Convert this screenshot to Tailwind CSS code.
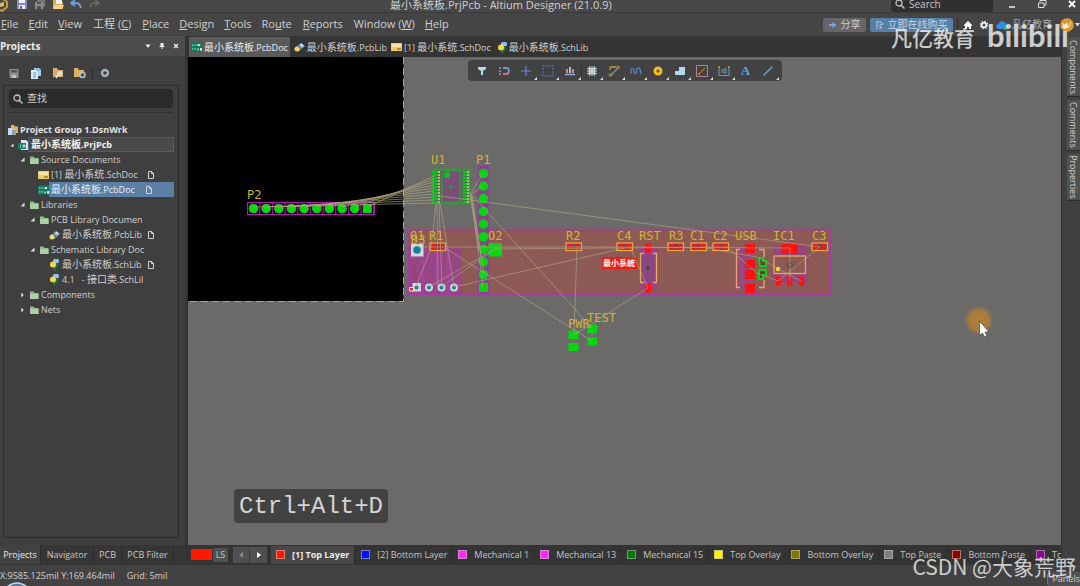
<!DOCTYPE html>
<html lang="zh">

<head>
    <meta charset="UTF-8">
    <meta name="viewport" content="width=device-width, initial-scale=1.0">
    <title>最小系统板.PrjPcb - Altium Designer (21.0.9)</title>
    <script src="https://cdn.jsdelivr.net/npm/@tailwindcss/browser@4"></script>
</head>

<body class="h-screen flex flex-col overflow-hidden bg-[#404040] text-[#d0d0d0] text-[9px] leading-[15px] font-['Open_Sans','Noto_Sans_CJK_SC',sans-serif] whitespace-nowrap">

    <!-- Shared icons -->
    <svg class="hidden">
        <symbol id="i-folder" viewBox="0 0 10 10"><path d="M1 1.500h3.500l1 1.500H9.500V9H1z" fill="#93bd8f" /><path d="M1 4h8.500v5H1z" fill="#abd0a5" /></symbol>
        <symbol id="i-pcb" viewBox="0 0 12 10"><path d="M0 0h12v10H0z" fill="#0f7a5c" /><path d="M2 2v2M4.500 2v2M2 6v2M4.500 6v2" stroke="#9fe0c8" /><path d="M7 2h3v2H7zM7 6.500h1.500v2H7zM10 6h2v3h-2z" fill="#e0f5ee" /></symbol>
        <symbol id="i-sch" viewBox="0 0 11 10"><path d="M0 1h11v8H0z" fill="#ecca72" /><path d="M1 2h9v3H1z" fill="#f8e3a2" /><path d="M6 6h4v2H6z" fill="#b98a35" /></symbol>
        <symbol id="i-pcblib" viewBox="0 0 11 10"><path d="M1 6l6-5 4 3-6 5z" fill="#8ba7c4" /><path d="M3 3l4 4" stroke="#2c3b4a" /><circle cx="3" cy="7" r="2.500" fill="#f3d667" /><path d="M7 2l2 2" stroke="#e8eef4" stroke-width="1.500" /></symbol>
        <symbol id="i-schlib" viewBox="0 0 11 11"><rect x="4" y="0" width="6" height="4" rx="1.500" fill="#8fc1ee" /><path d="M5 4h4v3l-3 4H4z" fill="#23743a" /><circle cx="4" cy="5.500" r="3" fill="#f5d64a" /></symbol>
        <symbol id="i-doc" viewBox="0 0 8 10"><path d="M1.500 1.500h3l2 2v5h-5zM4.500 1.500v2h2" fill="none" stroke="#d4d4d4" /></symbol>
        <symbol id="i-open" viewBox="0 0 6 6"><path d="M5.500 .5v5h-5z" fill="#dadada" /></symbol>
        <symbol id="i-closed" viewBox="0 0 6 6"><path d="M1.500 0l3 3-3 3z" fill="#dadada" /></symbol>
        <symbol id="i-search" viewBox="0 0 10 10"><circle cx="4" cy="4" r="3" fill="none" stroke="#c4c4c4" stroke-width="1.300" /><path d="M6.200 6.200L9.500 9.500" stroke="#c4c4c4" stroke-width="1.500" /></symbol>
    </svg>

    <!-- Title bar -->
    <header class="h-[17px] -mt-1 shrink-0 flex items-center bg-[#484848] border-b border-[#3a3a3a]">
        <div class="w-[390px] flex items-center gap-1.5">
            <svg class="w-2 h-4" viewBox="0 0 8 16"><path d="M-3 3h6l4 3v5l-5 4-4-2" fill="none" stroke="#c69a3c" stroke-width="2" /><path d="M0 7l4-1v4l-4 1z" fill="#e2b95b" /></svg>
            <button class="ml-0.5" aria-label="Save"><svg class="w-3 h-3" viewBox="0 0 12 12"><path d="M1 1h10v10H1z" fill="#8588c9" /><path d="M3 1h6v4H3zM3 7h6v4H3z" fill="#f2f2fa" /><path d="M4 8h2v3H4z" fill="#5d60a0" /></svg></button>
            <button aria-label="Save all"><svg class="w-3 h-3" viewBox="0 0 12 12"><path d="M3 1h8v8H3z" fill="#777" /><path d="M1 4h8v7H1z" fill="#8d8d8d" /><path d="M3 4h4v2H3zM3 8h4v3H3z" fill="#555" /></svg></button>
            <button aria-label="Open"><svg class="w-3 h-3" viewBox="0 0 12 12"><path d="M1 2h5l1 2h4v7H1z" fill="#d9a94f" /><path d="M4 1h6v5H4z" fill="#eef1f6" /><path d="M2 7h10l-2 4H1z" fill="#f5d68f" /></svg></button>
            <button aria-label="Undo"><svg class="w-3 h-3" viewBox="0 0 12 12"><path d="M5 2L1 5l4 3M1 5h5q4 0 5 5" fill="none" stroke="#6d9fdd" stroke-width="1.800" /></svg></button>
            <button aria-label="Redo"><svg class="w-3 h-3" viewBox="0 0 12 12"><path d="M7 2l4 3-4 3M11 5H7Q3 5 2 9" fill="none" stroke="#6c6c6c" stroke-width="1.500" /></svg></button>
        </div>
        <h1 class="text-[11px]">最小系统板.PrjPcb - Altium Designer (21.0.9)</h1>
        <label class="ml-auto w-[102px] h-[15px] px-1 flex items-center gap-1 bg-[#303030] rounded-b-sm text-[10px]">
            <svg class="w-2.5 h-2.5 shrink-0"><use href="#i-search" /></svg>
            <input type="text" placeholder="Search" aria-label="Search" class="w-full min-w-0 outline-none placeholder:text-[#c8c8c8]">
        </label>
        <div class="ml-3.5 mr-[3px] flex items-center gap-5">
            <button aria-label="Minimize"><svg class="w-2.5 h-2.5" viewBox="0 0 10 10"><path d="M2 8h6" stroke="#eee" stroke-width="1.500" /></svg></button>
            <button aria-label="Restore"><svg class="w-2.5 h-2.5" viewBox="0 0 10 10"><path d="M3 3V1.500h6V6H7M1.500 4H7v4.500H1.500z" fill="none" stroke="#ddd" /></svg></button>
            <button aria-label="Close"><svg class="w-2.5 h-2.5" viewBox="0 0 10 10"><path d="M2 2l6 6M8 2L2 8" stroke="#fff" stroke-width="1.800" /></svg></button>
        </div>
    </header>

    <!-- Menu bar -->
    <nav class="h-[23px] shrink-0 flex items-center bg-[#454545] text-[11px]">
        <div class="pl-px pb-0.5 flex gap-2.5">
            <button><u>F</u>ile</button>
            <button><u>E</u>dit</button>
            <button><u>V</u>iew</button>
            <button class="px-px">工程 (<u>C</u>)</button>
            <button><u>P</u>lace</button>
            <button><u>D</u>esign</button>
            <button><u>T</u>ools</button>
            <button>Ro<u>u</u>te</button>
            <button class="px-px"><u>R</u>eports</button>
            <button>Window (<u>W</u>)</button>
            <button><u>H</u>elp</button>
        </div>
        <div class="ml-auto flex items-center gap-1 text-[10px]">
            <button class="w-[43px] h-3.5 flex items-center justify-center gap-1 bg-[#666] rounded-xs">
                <svg class="w-2 h-2" viewBox="0 0 8 8"><path d="M0 4h4" stroke="#62aef5" stroke-width="2" /><path d="M3.500 1L7.500 4l-4 3z" fill="#62aef5" /></svg>分享
            </button>
            <button class="w-[83px] h-3.5 flex items-center justify-center gap-1 bg-[#567fa6] rounded-xs text-[#c5d5e4]">
                <svg class="w-2 h-2" viewBox="0 0 8 8"><path d="M1 0v8M1 1h4l2 2-3 1M3 4l3 3H3" fill="none" stroke="#b9cddf" /></svg>立即在线购买
            </button>
            <span class="w-px h-3.5 bg-[#2e2e2e]"></span>
            <button aria-label="Home"><svg class="w-3 h-3" viewBox="0 0 12 12"><path d="M6 2L2 6v1h1v3h2V8h2v2h2V7h1V6z" fill="#fff" /></svg></button>
            <button aria-label="Settings"><svg class="w-3 h-3" viewBox="0 0 12 12"><circle cx="6" cy="6" r="2.300" fill="none" stroke="#fff" stroke-width="1.600" /><circle cx="6" cy="6" r="3.600" fill="none" stroke="#fff" stroke-width="1.300" stroke-dasharray="1.400 1.430" /></svg></button>
            <button class="pl-0.5 pr-1 flex items-center gap-1 text-[#aaa]">
                <svg class="w-3 h-3" viewBox="0 0 12 12"><path d="M3 10a2.500 2.500 0 0 1-.5-5A3.500 3.500 0 0 1 9 4a3 3 0 0 1 0 6z" fill="#2f8fe8" /><circle cx="10" cy="9" r="2" fill="#41b860" /></svg>凡亿教育
            </button>
            <button class="flex items-center" aria-label="Account">
                <svg class="w-3.5 h-3.5" viewBox="0 0 14 14"><circle cx="7" cy="7" r="6.800" fill="#d99a32" /><path d="M3 5l1.500 5L7 5l1 5 3-6" fill="none" stroke="#fbe9c6" /></svg>
                <svg class="w-1.5 h-1.5" viewBox="0 0 6 6"><path d="M1 1h5L3.500 4.500z" fill="#ddd" /></svg>
            </button>
        </div>
    </nav>

    <main class="flex-1 min-h-0 flex">
        <!-- Projects panel -->
        <aside class="w-[185px] shrink-0 flex flex-col bg-[#3f3f3f]">
            <div class="h-5 shrink-0 pr-1.5 flex items-center bg-[#4c4c4c]">
                <h2 class="mr-auto text-[10px] font-bold text-[#eee]">Projects</h2>
                <div class="flex gap-2">
                    <button aria-label="Panel menu"><svg class="w-1.5 h-1.5" viewBox="0 0 6 6"><path d="M.5 1.500h5L3 5z" fill="#eee" /></svg></button>
                    <button aria-label="Pin"><svg class="w-1.5 h-1.5" viewBox="0 0 6 6"><path d="M1.500 0h3v3h1v1h-5V3h1zM2.500 4h1v2h-1z" fill="#eee" /></svg></button>
                    <button aria-label="Close panel"><svg class="w-1.5 h-1.5" viewBox="0 0 6 6"><path d="M1 1l4 4M5 1L1 5" stroke="#eee" stroke-width="1.300" /></svg></button>
                </div>
            </div>
            <div class="h-[29px] shrink-0 pt-1 pl-2 flex items-center gap-2.5">
                <button aria-label="Save"><svg class="w-3 h-3" viewBox="0 0 12 12"><path d="M1.500 2h9v9h-9z" fill="#8f8f8f" /><path d="M3 3h6v2.500H3z" fill="#555" /><path d="M4 8h4v3H4z" fill="#c4c4c4" /></svg></button>
                <button aria-label="Copy"><svg class="w-3 h-3" viewBox="0 0 12 12"><path d="M4 1h5l2 2v6H4z" fill="#a7cdf0" /><path d="M1 3h5l2 2v7H1z" fill="#dcebfa" /><path d="M3 6h3M3 8h3M3 10h3M6 2l3 2" stroke="#5791c8" /></svg></button>
                <button aria-label="Project folder"><svg class="w-3 h-3" viewBox="0 0 12 12"><path d="M1 1h4l1 2h5v7H1z" fill="#dcae66" /><circle cx="8" cy="6.500" r="2.500" fill="#d9e0e6" /><path d="M6 8l-2 3" stroke="#eee" stroke-width="1.500" /></svg></button>
                <button aria-label="Folder options"><svg class="w-3 h-3" viewBox="0 0 12 12"><path d="M0 1h4l1 2h5v7H0z" fill="#dcae66" /><circle cx="8.500" cy="8" r="2.500" fill="#4c4c4c" stroke="#b6c3c6" stroke-width="1.500" /></svg></button>
                <span class="-ml-1 w-px h-3 bg-[#2c2c2c]"></span>
                <button class="-ml-1" aria-label="Options"><svg class="w-3 h-3" viewBox="0 0 12 12"><circle cx="6" cy="6" r="3" fill="none" stroke="#a5b1b9" stroke-width="2.400" /></svg></button>
            </div>
            <div class="flex-1 ml-[3px] mr-1.5 mb-[7px] border border-[#2d2d2d]">
                <div class="px-[5px] pt-[3px] pb-1">
                    <label class="h-[19px] px-1 flex items-center gap-1 bg-[#2b2b2b] rounded-sm text-[10px]">
                        <svg class="w-2.5 h-2.5 shrink-0"><use href="#i-search" /></svg>
                        <input type="text" placeholder="查找" aria-label="查找" class="w-full min-w-0 outline-none placeholder:text-[#d0d0d0]">
                    </label>
                </div>
                <div class="mx-[5px] border-t border-[#303030]"></div>
                <ul class="mt-[9px] mr-1">
                    <li class="h-[15px] pl-1 flex items-center gap-0.5 font-bold text-[#e4e4e4]">
                        <svg class="w-2.5 h-2.5" viewBox="0 0 10 10"><path d="M3 0h3l1 1.500h3V8H3z" fill="#e0b066" /><path d="M0 3h5v7H0z" fill="#c9d6e3" /><path d="M4 5h4v5H4z" fill="#8fa3b8" /></svg>
                        Project Group 1.DsnWrk
                    </li>
                    <li class="h-[15px] pl-1.5 flex items-center gap-1 font-bold text-[#f2f2f2]">
                        <svg class="w-1 h-1.5"><use href="#i-open" /></svg>
                        <svg class="w-2.5 h-2.5" viewBox="0 0 10 10"><path d="M3 0h5l2 2v8H3z" fill="#dfe9e6" /><path d="M0 3h8v6H0z" fill="#0f8063" /><path d="M2 5h1M2 7h1M5 5h2v2H5z" stroke="#c8f0e2" fill="none" /></svg>
                        <span class="flex-1 h-[15px] -ml-1 pl-0.5 leading-[13px] bg-[#4a4a4a] border border-[#46637c]"><span class="text-[10px]">最小系统板</span>.PrjPcb</span>
                    </li>
                    <li class="h-[15px] pl-4 flex items-center gap-1"><svg class="w-[5px] h-[5px]"><use href="#i-open" /></svg><svg class="w-2.5 h-2.5"><use href="#i-folder" /></svg><span class="-ml-0.5">Source Documents</span></li>
                    <li class="h-[15px] pl-[34px] flex items-center gap-0.5">
                        <svg class="w-[11px] h-2.5"><use href="#i-sch" /></svg><span class="w-[94px]">[1] <span class="text-[10px]">最小系统</span>.SchDoc</span><svg class="w-2 h-2.5"><use href="#i-doc" /></svg>
                    </li>
                    <li class="h-[15px] pl-[34px] flex items-center">
                        <svg class="w-[11px] h-2.5"><use href="#i-pcb" /></svg><span class="flex-1 flex items-center pl-0.5 bg-[#5c80a5] text-[#e6eef5]"><span class="w-[94px]"><span class="text-[10px]">最小系统板</span>.PcbDoc</span><svg class="w-2 h-2.5"><use href="#i-doc" /></svg></span>
                    </li>
                    <li class="h-[15px] pl-4 flex items-center gap-1"><svg class="w-[5px] h-[5px]"><use href="#i-open" /></svg><svg class="w-2.5 h-2.5"><use href="#i-folder" /></svg><span class="-ml-0.5">Libraries</span></li>
                    <li class="h-[15px] pl-[26px] flex items-center gap-1"><svg class="w-[5px] h-[5px]"><use href="#i-open" /></svg><svg class="w-2.5 h-2.5"><use href="#i-folder" /></svg><span class="-ml-0.5">PCB Library Documen</span></li>
                    <li class="h-[15px] pl-[45px] flex items-center gap-0.5">
                        <svg class="w-[11px] h-2.5"><use href="#i-pcblib" /></svg><span class="w-[83px]"><span class="text-[10px]">最小系统板</span>.PcbLib</span><svg class="w-2 h-2.5"><use href="#i-doc" /></svg>
                    </li>
                    <li class="h-[15px] pl-[26px] flex items-center gap-1"><svg class="w-[5px] h-[5px]"><use href="#i-open" /></svg><svg class="w-2.5 h-2.5"><use href="#i-folder" /></svg><span class="-ml-0.5">Schematic Library Doc</span></li>
                    <li class="h-[15px] pl-[45px] flex items-center gap-0.5">
                        <svg class="w-[11px] h-[11px]"><use href="#i-schlib" /></svg><span class="w-[83px]"><span class="text-[10px]">最小系统板</span>.SchLib</span><svg class="w-2 h-2.5"><use href="#i-doc" /></svg>
                    </li>
                    <li class="h-[15px] pl-[45px] flex items-center gap-0.5">
                        <svg class="w-[11px] h-[11px]"><use href="#i-schlib" /></svg><span class="whitespace-pre">4.1   - <span class="text-[10px]">接口类</span>.SchLil</span>
                    </li>
                    <li class="h-[15px] pl-4 flex items-center gap-1"><svg class="w-[5px] h-1.5"><use href="#i-closed" /></svg><svg class="w-2.5 h-2.5"><use href="#i-folder" /></svg><span class="-ml-0.5">Components</span></li>
                    <li class="h-[15px] pl-4 flex items-center gap-1"><svg class="w-[5px] h-1.5"><use href="#i-closed" /></svg><svg class="w-2.5 h-2.5"><use href="#i-folder" /></svg><span class="-ml-0.5">Nets</span></li>
                </ul>
            </div>
            <div class="h-[19px] shrink-0 flex bg-[#363636] text-[#c6c6c6]">
                <button class="w-10 bg-[#424242] text-[#e6e6e6]">Projects</button>
                <button class="w-[54px] border-x border-[#2c2c2c]">Navigator</button>
                <button class="w-[28px] border-r border-[#2c2c2c]">PCB</button>
                <button class="w-[52px] border-r border-[#2c2c2c]">PCB Filter</button>
            </div>
        </aside>

        <!-- Editor -->
        <section class="flex-1 min-w-0 flex flex-col pl-[3px] bg-[#343434]">
            <div class="h-[21px] shrink-0 flex items-end">
                <button class="h-5 ml-px px-0.5 flex items-center gap-0.5 bg-[#5a5a5a] text-[#eee]"><svg class="w-[11px] h-2.5"><use href="#i-pcb" /></svg><span><span class="text-[10px]">最小系统板</span>.PcbDoc</span></button>
                <button class="h-5 px-1 flex items-center gap-0.5"><svg class="w-[11px] h-2.5"><use href="#i-pcblib" /></svg><span><span class="text-[10px]">最小系统板</span>.PcbLib</span></button>
                <button class="h-5 pr-0.5 flex items-center gap-0.5"><svg class="w-[11px] h-2.5"><use href="#i-sch" /></svg><span>[1] <span class="text-[10px]">最小系统</span>.SchDoc</span></button>
                <button class="h-5 px-1 flex items-center gap-px"><svg class="w-[11px] h-[11px]"><use href="#i-schlib" /></svg><span><span class="text-[10px]">最小系统板</span>.SchLib</span></button>
            </div>

            <div class="flex-1 min-h-0 relative overflow-hidden bg-[#6b6a68]">
                <svg class="w-full h-full font-['DejaVu_Sans_Mono',monospace]">
                    <defs>
                        <pattern id="hatch" width="4" height="4" patternUnits="userSpaceOnUse"><path d="M0 0l4 4" stroke="#a83ba6" stroke-width=".7" /></pattern>
                        <radialGradient id="click"><stop offset="0" stop-color="#b58032" /><stop offset=".7" stop-color="#a97d3c" stop-opacity=".9" /><stop offset="1" stop-color="#8d7452" stop-opacity="0" /></radialGradient>
                    </defs>
                    <g transform="translate(-188 -57)">
                        <!-- board area -->
                        <path d="M188 57h215.500v244H188z" fill="#000" />
                        <path d="M403.500 57v244.500H188" fill="none" stroke="#a5a5a5" stroke-dasharray="7 4" />

                        <!-- room -->
                        <rect x="408.500" y="229.500" width="422" height="65" fill="#8c5954" stroke="#aa39a8" stroke-width="1.500" />
                        <rect x="409" y="247" width="53" height="47" fill="#8f4c70" />
                        <rect x="409" y="247" width="53" height="47" fill="url(#hatch)" />
                        <path d="M423 247v47M436 247v47M448 247v47" stroke="#a93fa2" stroke-width="2" />
                        <rect x="478" y="166" width="11" height="128" fill="#87438a" stroke="#96409a" />

                        <!-- P2 -->
                        <rect x="247.500" y="202.500" width="127" height="12" fill="#1d001d" stroke="#b515b5" />
                        <g id="p2"></g>

                        <!-- U1 -->
                        <rect x="433" y="169.500" width="36.500" height="34" fill="#5d685c" stroke="#0bb91d" stroke-width="1.500" />
                        <rect x="442" y="171" width="18" height="31" fill="#71526f" stroke="#12b526" />
                        <rect x="443" y="172" width="16" height="29" fill="url(#hatch)" opacity=".5" />
                        <path d="M436 171v32M466.500 171v32" stroke="#0cc51e" stroke-width="7" stroke-dasharray="2 1" />
                        <path d="M439 171v32M468 171v32" stroke="#a6c06c" stroke-width="2" stroke-dasharray="2 1" />
                        <circle cx="447" cy="175" r="3" fill="#0bc41c" />
                        <path d="M449 187h4M451 185v4" stroke="#0bb91d" />

                        <!-- chip parts: resistors and capacitors -->
                        <g id="chips"></g>

                        <rect x="411" y="244" width="12.500" height="12.500" fill="#cfd6dd" />
                        <circle cx="417" cy="250" r="3.800" fill="#0b8494" />
                        <rect x="412.500" y="283" width="8.500" height="8.500" fill="#cfd6dd" />
                        <circle cx="416.500" cy="287.500" r="2" fill="#0b8494" />
                        <circle cx="429" cy="287.500" r="3" fill="#0b8494" stroke="#cfd6dd" stroke-width="2" />
                        <circle cx="441.500" cy="287.500" r="3" fill="#0b8494" stroke="#cfd6dd" stroke-width="2" />
                        <circle cx="454" cy="287.500" r="3" fill="#0b8494" stroke="#cfd6dd" stroke-width="2" />
                        <path d="M409.500 287.500h4v3.500h-4z" fill="#c33" stroke="#eec" />

                        <!-- RST -->
                        <rect x="639" y="248" width="19" height="41" fill="#9c4380" />
                        <rect x="641" y="254" width="14" height="29" fill="#7e4f72" />
                        <rect x="641" y="254" width="14" height="29" fill="url(#hatch)" />
                        <path d="M644 253.500h-3.500v29h3.500M653 253.500h3.500v29H653" fill="none" stroke="#e8a968" stroke-width="1.300" />
                        <path d="M645 243.500h6v9h-6zM645 283.500h6v9h-6z" fill="#f11" />
                        <circle cx="648" cy="268" r="2" fill="#3a5040" />
                        <rect x="602" y="257" width="35" height="12" fill="#f01b14" />

                        <!-- USB -->
                        <rect x="735" y="248" width="17" height="41" fill="#98497b" />
                        <path d="M740 249.500h-3.500v38h3.500M759 249.500h5v8M764 280v7.500h-5" fill="none" stroke="#e8a968" stroke-width="1.300" />
                        <path d="M745 244h10v9h-10zM745 260h10v8h-10zM745 270h10v9h-10zM745 284h10v9h-10z" fill="#f11" />
                        <path d="M759 258h4v3h3v5h-6zM759 270h7v5h-3v4h-4z" fill="#733" stroke="#0bcf1c" stroke-width="2" />

                        <!-- IC1 -->
                        <rect x="773" y="245" width="34" height="38" fill="#954678" />
                        <rect x="774" y="256" width="31.500" height="17.500" fill="#8c5954" stroke="#e8a968" stroke-width="1.300" />
                        <path d="M781 244h17v10h-17zM776 276.500h5v9h-5zM787 276.500h5v9h-5zM799 276.500h5v9h-5z" fill="#f11" />
                        <circle cx="778" cy="269" r="2.200" fill="#fde31a" />
                        <circle cx="790" cy="265" r="2.500" fill="none" stroke="#48503c" />

                        <!-- pads on the header and loose parts -->
                        <g id="p1"></g>
                        <path d="M488.500 243h13.500v13.500h-13.500zM568.500 330.500h10v8.500h-10zM568.500 343h10v8h-10zM587.500 324.500h9.500v9h-9.500zM587.500 337.500h9.500v8h-9.500z" fill="#04d70c" />
                        <path d="M573.500 339v4M592 333v5" stroke="#04d70c" stroke-width="2" stroke-dasharray="1 1" />

                        <g id="rats" fill="none" stroke="#aca880" stroke-opacity=".65"></g>

                        <!-- designators -->
                        <g font-size="12" fill="#d2b52b">
                            <text x="247" y="199">P2</text>
                            <text x="431" y="164">U1</text>
                            <text x="476" y="164">P1</text>
                            <text x="410" y="240">Q1</text>
                            <text x="411" y="244">D3</text>
                            <text x="429" y="240">R1</text>
                            <text x="488" y="240">O2</text>
                            <text x="566" y="240">R2</text>
                            <text x="617" y="240">C4</text>
                            <text x="639" y="240">RST</text>
                            <text x="669" y="240">R3</text>
                            <text x="690" y="240">C1</text>
                            <text x="713" y="240">C2</text>
                            <text x="735" y="240">USB</text>
                            <text x="773" y="240">IC1</text>
                            <text x="812" y="240">C3</text>
                            <text x="568" y="328">PWR</text>
                            <text x="587" y="322">TEST</text>
                        </g>
                        <text x="603" y="266" font-size="8" fill="#fff" class="font-bold font-['Noto_Sans_CJK_SC',sans-serif]">最小系统</text>

                        <!-- mouse -->
                        <circle cx="979" cy="320.500" r="15" fill="url(#click)" />
                        <path d="M979.500 321v14.500l3-2.500 2 4 2.500-1-2-4h4z" fill="#fff" stroke="#4a4038" stroke-width=".7" />
                    </g>
                </svg>

                <!-- Active bar -->
                <div class="absolute top-[3px] left-1/2 -translate-x-1/2 h-[21px] px-[3px] flex items-center bg-[#424242] rounded-sm">
                    <button class="w-[22px] h-[18px] flex items-center justify-center" aria-label="Filter"><svg class="w-3 h-3" viewBox="0 0 12 12"><path d="M2 2h8v2L7 6v4H5V6L2 4z" fill="#b5dcee" /></svg></button>
                    <button class="w-[22px] h-[18px] flex items-center justify-center" aria-label="Snap"><svg class="w-3 h-3" viewBox="0 0 12 12"><path d="M5 3h3a3 3 0 0 1 0 6" fill="none" stroke="#7497dd" stroke-width="1.800" /><path d="M5 9h3a3 3 0 0 0 2.500-1.500" fill="none" stroke="#e06a72" stroke-width="1.800" /><path d="M1 3h2M1 6h2M1 9h2" stroke="#c5c5c5" /></svg></button>
                    <button class="w-[22px] h-[18px] flex items-center justify-center relative" aria-label="Move"><svg class="w-3 h-3" viewBox="0 0 12 12"><path d="M6 1v10M1 6h10" stroke="#5d8bd0" stroke-width="1.200" /></svg><i class="absolute right-0 bottom-0 border-l-3 border-b-3 border-l-transparent border-b-[#ddd]"></i></button>
                    <button class="w-[22px] h-[18px] flex items-center justify-center relative" aria-label="Select area"><svg class="w-3 h-3" viewBox="0 0 12 12"><path d="M1 1h10v10H1z" fill="none" stroke="#6079bd" stroke-dasharray="2 1" /></svg><i class="absolute right-0 bottom-0 border-l-3 border-b-3 border-l-transparent border-b-[#ddd]"></i></button>
                    <button class="w-[22px] h-[18px] flex items-center justify-center relative" aria-label="Align"><svg class="w-3 h-3" viewBox="0 0 12 12"><path d="M2 4h2v4H2zM8 4h2v4H8z" fill="#dd857c" /><path d="M5 2h2v6H5z" fill="#92c4ea" /><path d="M1 9.500h10" stroke="#8aaee0" stroke-width="1.500" /></svg><i class="absolute right-0 bottom-0 border-l-3 border-b-3 border-l-transparent border-b-[#ddd]"></i></button>
                    <button class="w-[22px] h-[18px] flex items-center justify-center relative border-l border-[#363636]" aria-label="Component"><svg class="w-3 h-3" viewBox="0 0 12 12"><path d="M2.500 2.500h7v7h-7z" fill="#b9cdd2" /><path d="M1 3.500h10M1 6h10M1 8.500h10M3.500 1v10M6 1v10M8.500 1v10" stroke="#b9cdd2" /></svg><i class="absolute right-0 bottom-0 border-l-3 border-b-3 border-l-transparent border-b-[#ddd]"></i></button>
                    <button class="w-[22px] h-[18px] flex items-center justify-center relative" aria-label="Route"><svg class="w-3 h-3" viewBox="0 0 12 12"><path d="M2 2h6M2 2v3" fill="none" stroke="#c79a2c" stroke-width="1.300" /><path d="M3.500 9.500L9 4" stroke="#6d9ac9" stroke-width="1.300" /><circle cx="10" cy="2.500" r="1.300" fill="none" stroke="#d3a42e" /><circle cx="2.500" cy="10" r="1.300" fill="none" stroke="#d3a42e" /></svg><i class="absolute right-0 bottom-0 border-l-3 border-b-3 border-l-transparent border-b-[#ddd]"></i></button>
                    <button class="w-[22px] h-[18px] flex items-center justify-center relative" aria-label="Tune length"><svg class="w-3 h-3" viewBox="0 0 12 12"><path d="M1 9V5a1.500 1.500 0 0 1 3 0v2.500a1.300 1.300 0 0 0 2.500 0V5A1.500 1.500 0 0 1 10 4.500L11 9" fill="none" stroke="#5a86c2" stroke-width="1.200" /></svg><i class="absolute right-0 bottom-0 border-l-3 border-b-3 border-l-transparent border-b-[#ddd]"></i></button>
                    <button class="w-[22px] h-[18px] flex items-center justify-center relative" aria-label="Via"><svg class="w-3 h-3" viewBox="0 0 12 12"><circle cx="6" cy="6" r="3" fill="#5c4a14" stroke="#f1bd22" stroke-width="3" /></svg><i class="absolute right-0 bottom-0 border-l-3 border-b-3 border-l-transparent border-b-[#ddd]"></i></button>
                    <button class="w-[22px] h-[18px] flex items-center justify-center relative" aria-label="Polygon"><svg class="w-3 h-3" viewBox="0 0 12 12"><path d="M5 2h6v8H1V6h4z" fill="#b5dcee" /></svg><i class="absolute right-0 bottom-0 border-l-3 border-b-3 border-l-transparent border-b-[#ddd]"></i></button>
                    <button class="w-[22px] h-[18px] flex items-center justify-center relative" aria-label="Keepout"><svg class="w-3 h-3" viewBox="0 0 12 12"><path d="M.5 .5h11v11H.5z" fill="none" stroke="#b87f9e" /><path d="M3 9l6-6" stroke="#c79a2c" /><circle cx="3" cy="9" r="1" fill="#c79a2c" /></svg><i class="absolute right-0 bottom-0 border-l-3 border-b-3 border-l-transparent border-b-[#ddd]"></i></button>
                    <button class="w-[22px] h-[18px] flex items-center justify-center relative" aria-label="Dimension"><svg class="w-3 h-3" viewBox="0 0 12 12"><path d="M1 2v8.500h10V2M4 4v4M6 4h2v4H6z" fill="none" stroke="#7596c8" /><path d="M1 1v2M11 1v2" stroke="#c79a2c" stroke-width="1.500" /></svg><i class="absolute right-0 bottom-0 border-l-3 border-b-3 border-l-transparent border-b-[#ddd]"></i></button>
                    <button class="w-[22px] h-[18px] flex items-center justify-center text-[13px] font-bold text-[#5da3e4] font-['Liberation_Serif',serif]">A</button>
                    <button class="w-[22px] h-[18px] flex items-center justify-center relative" aria-label="Line"><svg class="w-3 h-3" viewBox="0 0 12 12"><path d="M1.500 10.500l9-9" stroke="#5da3e4" stroke-width="1.500" /></svg><i class="absolute right-0 bottom-0 border-l-3 border-b-3 border-l-transparent border-b-[#ddd]"></i></button>
                </div>

                <!-- Pressed keys -->
                <kbd class="absolute left-[46px] bottom-[22px] h-[34px] px-[5px] flex items-center bg-[#424242] rounded-sm text-[24px] text-[#d4d4d4] font-['Liberation_Mono',monospace]">Ctrl+Alt+D</kbd>
            </div>

            <!-- Layer tabs -->
            <div class="h-[19px] shrink-0 flex items-center overflow-hidden text-[#c4c4c4]">
                <button class="ml-[3px] mr-px w-[21px] h-[11px] shrink-0 bg-[#ff1a00]" aria-label="Current layer"></button>
                <button class="w-[15px] h-3.5 shrink-0 leading-[14px] bg-[#505050]">LS</button>
                <div class="ml-[5px] mr-1 h-4 shrink-0 flex bg-[#505050]">
                    <button class="w-[17px] flex items-center justify-center border-r border-[#3a3a3a]" aria-label="Previous"><svg class="w-1.5 h-1.5" viewBox="0 0 6 6"><path d="M5 0v6L1 3z" fill="#888" /></svg></button>
                    <button class="w-[17px] flex items-center justify-center" aria-label="Next"><svg class="w-1.5 h-1.5" viewBox="0 0 6 6"><path d="M1 0v6l4-3z" fill="#fff" /></svg></button>
                </div>
                <button class="h-[18px] px-[5px] shrink-0 flex items-center gap-[7px] bg-[#484848] border-r border-[#2c2c2c] font-bold text-[#eee]"><i class="w-[9px] h-[9px] bg-[#ff1a00] border border-[#e08070]"></i>[1] Top Layer</button>
                <button class="h-[18px] px-[5px] ml-px shrink-0 flex items-center gap-[7px] border-r border-[#2c2c2c]"><i class="w-[9px] h-[9px] bg-[#0010ff] border border-[#7a80d0]"></i>[2] Bottom Layer</button>
                <button class="h-[18px] px-[5px] shrink-0 flex items-center gap-[7px] border-r border-[#2c2c2c]"><i class="w-[9px] h-[9px] bg-[#ff2af0] border border-[#e080d8]"></i>Mechanical 1</button>
                <button class="h-[18px] px-[5px] shrink-0 flex items-center gap-[7px] border-r border-[#2c2c2c]"><i class="w-[9px] h-[9px] bg-[#ff2af0] border border-[#e080d8]"></i>Mechanical 13</button>
                <button class="h-[18px] px-[5px] shrink-0 flex items-center gap-[7px] border-r border-[#2c2c2c]"><i class="w-[9px] h-[9px] bg-[#007a00] border border-[#6aa06a]"></i>Mechanical 15</button>
                <button class="h-[18px] px-[5px] shrink-0 flex items-center gap-[7px] border-r border-[#2c2c2c]"><i class="w-[9px] h-[9px] bg-[#fff200] border border-[#d0c870]"></i>Top Overlay</button>
                <button class="h-[18px] px-[5px] shrink-0 flex items-center gap-[7px] border-r border-[#2c2c2c]"><i class="w-[9px] h-[9px] bg-[#7d7800] border border-[#a8a460]"></i>Bottom Overlay</button>
                <button class="h-[18px] px-[5px] shrink-0 flex items-center gap-[7px] border-r border-[#2c2c2c]"><i class="w-[9px] h-[9px] bg-[#808080] border border-[#a8a8a8]"></i>Top Paste</button>
                <button class="h-[18px] px-[5px] shrink-0 flex items-center gap-[7px] border-r border-[#2c2c2c]"><i class="w-[9px] h-[9px] bg-[#860800] border border-[#b87068]"></i>Bottom Paste</button>
                <button class="h-[18px] pl-[5px] shrink-0 flex items-center gap-[7px]"><i class="w-[9px] h-[9px] bg-[#880a88] border border-[#b070b0]"></i>Tc</button>
            </div>
        </section>

        <!-- Right dock -->
        <aside class="w-[19px] shrink-0 pl-[5px] pt-px flex flex-col gap-[3px] bg-[#404040] border-l border-[#363636]">
            <button class="h-[60px] flex items-center justify-center bg-[#505050] border-b border-[#2c2c2c] [writing-mode:vertical-rl]">Components</button>
            <button class="h-[51px] flex items-center justify-center bg-[#505050] border-b border-[#2c2c2c] [writing-mode:vertical-rl]">Comments</button>
            <button class="h-[47px] flex items-center justify-center bg-[#505050] border-b border-[#2c2c2c] [writing-mode:vertical-rl]">Properties</button>
        </aside>
    </main>

    <!-- Status bar -->
    <footer class="h-[22px] shrink-0 relative flex items-center bg-[#424242] border-t border-[#363636]">
        <span>X:9585.125mil Y:169.464mil</span>
        <span class="ml-3">Grid: 5mil</span>
        <button class="ml-auto mt-1.5 h-3.5 pl-1 leading-[14px] bg-[#505050] rounded-l-sm border-l border-[#777]">Panels</button>
        <svg class="absolute left-1.5 bottom-0 w-[22px] h-1" viewBox="0 0 22 4"><path d="M1 5Q11-3 21 5" fill="#56759c" stroke="#c5d9ea" stroke-width="1.500" /></svg>
    </footer>

    <!-- Watermarks -->
    <div class="absolute right-[11px] top-[15px] flex items-center gap-3 pointer-events-none text-white/75">
        <span class="pt-1 text-[21px] leading-[36px] font-medium font-['Noto_Sans_CJK_SC',sans-serif]">凡亿教育</span>
        <span class="text-[31px] leading-[36px] font-bold font-['Liberation_Sans_Narrow',Lato,sans-serif]">bilibili</span>
    </div>
    <div class="absolute right-1 bottom-1.5 pointer-events-none text-[21px] leading-[28px] text-white/75 font-['Noto_Sans_CJK_SC',sans-serif]">CSDN @大象荒野</div>

    <script>
        const NS = 'http://www.w3.org/2000/svg';

        function draw(parent, tag, attrs) {
            const el = document.createElementNS(NS, tag);
            for (const key in attrs) el.setAttribute(key, attrs[key]);
            document.getElementById(parent).appendChild(el);
        }

        function pad(parent, x, y, square) {
            if (square) {
                draw(parent, 'rect', { x: x - 4.5, y: y - 4.5, width: 9, height: 9, fill: '#04d70c' });
            } else {
                draw(parent, 'circle', { cx: x, cy: y, r: 4.8, fill: '#04d70c' });
            }
        }

        const lines = [];

        // 10 pin headers, pin 1 is square
        for (let i = 0; i < 10; i++) {
            const x = 253.5 + i * 12.65;
            draw('p2', 'path', { d: `M${x + 6.3} 202v13`, stroke: '#b515b5' });
            pad('p2', x, 208.5, i === 9);
            pad('p1', 483.5, 173.5 + i * 12.65, i === 9);
            lines.push([x, 207, 434, 203 - i * 3]);
        }

        [430, 566, 617, 668, 691, 713, 812].forEach(x => {
            draw('chips', 'rect', { x: x, y: 243, width: 15.5, height: 7.5, fill: '#7a3a5c', stroke: '#f0a53a', 'stroke-width': 1.3 });
            draw('chips', 'path', { d: `M${x + 1.5} 244h5v5.500h-5zM${x + 9} 244h5v5.500h-5z`, fill: '#e3201c' });
        });

        lines.push(
            [440, 196, 820, 247], [470, 195, 483, 173], [470, 195, 483, 186],
            [470, 195, 479, 250], [471, 195, 482, 262], [471, 195, 483, 287], [472, 195, 484, 275],
            [436, 203, 431, 248], [437, 203, 438, 287], [439, 203, 442, 287], [440, 203, 454, 287],
            [431, 248, 416, 287], [429, 287, 495, 249], [441, 287, 495, 249], [454, 287, 625, 248],
            [423, 247, 625, 247], [495, 249, 729, 247], [445, 248, 592, 341], [472, 195, 592, 328],
            [577, 247, 574, 335], [574, 335, 648, 288], [630, 247, 648, 288],
            [625, 247, 790, 248], [700, 247, 757, 257], [727, 247, 757, 273],
            [757, 257, 801, 281], [757, 273, 778, 281], [820, 247, 778, 281], [790, 248, 790, 281]
        );
        lines.forEach(l => draw('rats', 'path', { d: `M${l[0]} ${l[1]}L${l[2]} ${l[3]}` }));
    </script>
</body>

</html>
